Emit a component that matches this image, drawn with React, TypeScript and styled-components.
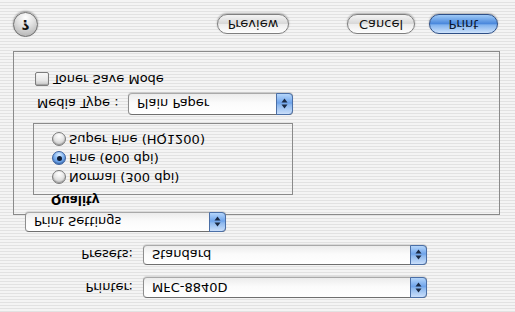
import React from 'react';
import styled, { createGlobalStyle, css } from 'styled-components';

const GlobalStyle = createGlobalStyle`
  html, body {
    margin: 0;
    padding: 0;
    background: #eeeeee;
  }
  * {
    box-sizing: border-box;
  }
`;

// the reference shows the whole sheet turned upside down (vertical mirror)
const Sheet = styled.div`
  width: 515px;
  height: 312px;
  overflow: hidden;
  padding-top: 14px;
  font-family: "DejaVu Sans", "Liberation Sans", sans-serif;
  font-size: 13px;
  color: #000;
  background: repeating-linear-gradient(
    to bottom,
    #e2e2e2 0px,
    #e2e2e2 1px,
    #f4f4f4 1px,
    #f4f4f4 3px
  );
  transform: scaleY(-1);
`;

const FieldRow = styled.div<{ gap?: number }>`
  display: grid;
  grid-template-columns: 133px 284px;
  column-gap: 10px;
  align-items: center;
  margin-top: ${p => p.gap ?? 0}px;
`;

const FieldLabel = styled.span`
  text-align: right;
  line-height: 15px;
`;

const PopupBox = styled.div<{ w: number; h: number }>`
  position: relative;
  display: flex;
  width: ${p => p.w}px;
  height: ${p => p.h}px;
  border: 1px solid #8d8d8d;
  border-top-color: #6f6f6f;
  border-bottom-color: #a9a9a9;
  border-radius: 4px;
  background: linear-gradient(to bottom, #ffffff 0%, #fbfbfb 55%, #ececec 100%);
  box-shadow: 0 1px 1px rgba(0, 0, 0, 0.12);
`;

const PopupText = styled.span`
  flex: 1;
  padding-left: 8px;
  display: flex;
  align-items: center;
  white-space: nowrap;
`;

const PopupArrows = styled.span`
  width: 17px;
  margin: -1px -1px -1px 0;
  border: 1px solid #4b6fa6;
  border-radius: 0 4px 4px 0;
  background: linear-gradient(to bottom, #c9defa 0%, #8db8ee 45%, #6ea3ea 55%, #b5d6fb 100%);
  display: flex;
  align-items: center;
  justify-content: center;
`;

const Popup: React.FC<{ value: string; w: number; h: number }> = ({ value, w, h }) => (
  <PopupBox w={w} h={h}>
    <PopupText>{value}</PopupText>
    <PopupArrows>
      <svg width="7" height="11" viewBox="0 0 7 11">
        <path d="M3.5 0.5 L6.5 4.5 L0.5 4.5 Z" fill="#1b2a44" />
        <path d="M3.5 10.5 L6.5 6.5 L0.5 6.5 Z" fill="#1b2a44" />
      </svg>
    </PopupArrows>
  </PopupBox>
);

const TabArea = styled.div`
  margin-top: 13px;
`;

const TabPopupSlot = styled.div`
  position: relative;
  z-index: 1;
  margin-left: 25px;
  width: 201px;
`;

const SettingsBox = styled.div`
  margin: -3px 15px 0 13px;
  height: 164px;
  border: 1px solid #8a8a8a;
  padding: 8px 0 0 19px;
`;

const GroupTitle = styled.div`
  margin-left: 18px;
  font-size: 12px;
  font-weight: bold;
  line-height: 12px;
  height: 11px;
`;

const GroupBox = styled.div`
  width: 260px;
  height: 72px;
  border: 1px solid #8a8a8a;
  padding: 7px 0 0 18px;
`;

const RadioRow = styled.label`
  display: flex;
  align-items: center;
  gap: 3px;
  height: 19px;
  line-height: 15px;
`;

const RadioDot = styled.span<{ on?: boolean }>`
  width: 14px;
  height: 14px;
  border-radius: 50%;
  border: 1px solid #7b7b7b;
  display: flex;
  align-items: center;
  justify-content: center;
  background: radial-gradient(circle at 50% 75%, #ffffff 0%, #e6e6e6 45%, #b9b9b9 100%);
  box-shadow: inset 0 1px 1px rgba(0, 0, 0, 0.25);
  ${p => p.on && css`
    border-color: #3a5f9c;
    background: radial-gradient(circle at 50% 75%, #d8ecff 0%, #7fb2f0 45%, #3f7fd8 100%);
    &::after {
      content: '';
      width: 5px;
      height: 5px;
      border-radius: 50%;
      background: #0f1c33;
    }
  `}
`;

const MediaRow = styled.div`
  display: flex;
  align-items: center;
  margin-top: 8px;
  padding-left: 4px;
`;

const MediaLabel = styled.span`
  width: 91px;
  white-space: nowrap;
`;

const CheckRow = styled.label`
  display: flex;
  align-items: center;
  gap: 4px;
  margin-top: 6px;
  padding-left: 2px;
  line-height: 15px;
`;

const CheckBox = styled.span`
  width: 14px;
  height: 14px;
  border: 1px solid #7d7d7d;
  border-radius: 2px;
  background: linear-gradient(to bottom, #c8c8c8 0%, #e8e8e8 40%, #f8f8f8 100%);
  box-shadow: inset 0 1px 1px rgba(0, 0, 0, 0.2);
`;

const ButtonRow = styled.div`
  display: flex;
  align-items: center;
  margin-top: 14px;
  padding: 0 17px 0 13px;
`;

const HelpButton = styled.button`
  width: 25px;
  height: 25px;
  padding: 0;
  border-radius: 50%;
  border: 1px solid #6e6e6e;
  background: radial-gradient(circle at 50% 80%, #ffffff 0%, #e2e2e2 40%, #a9a9a9 100%);
  box-shadow: 0 1px 2px rgba(0, 0, 0, 0.35);
  font-family: "DejaVu Sans", sans-serif;
  font-size: 14px;
  font-weight: bold;
  color: #111;
  line-height: 23px;
`;

const Spacer = styled.div`
  flex: 1;
`;

const PillButton = styled.button<{ w: number; primary?: boolean; gap?: number }>`
  width: ${p => p.w}px;
  height: 20px;
  margin-left: ${p => p.gap ?? 0}px;
  padding: 0;
  border-radius: 10px;
  border: 1px solid #7f7f7f;
  font-family: "DejaVu Sans", sans-serif;
  font-size: 13px;
  color: #111;
  line-height: 18px;
  background: linear-gradient(to bottom, #fefefe 0%, #ededed 48%, #d8d8d8 52%, #f4f4f4 100%);
  box-shadow: 0 1px 2px rgba(0, 0, 0, 0.3);
  ${p => p.primary && css`
    border-color: #2e4f86;
    color: #0c1830;
    background: linear-gradient(to bottom, #cfe3fb 0%, #7fb1ee 45%, #4a88dc 52%, #9fcaf7 100%);
  `}
`;

const qualities = [
  { label: 'Normal (300 dpi)', on: false },
  { label: 'Fine (600 dpi)', on: true },
  { label: 'Super Fine (HQ1200)', on: false },
];

export default function App() {
  return (
    <>
      <GlobalStyle />
      <Sheet>
        <FieldRow>
          <FieldLabel>Printer:</FieldLabel>
          <Popup value="MFC-8840D" w={284} h={21} />
        </FieldRow>
        <FieldRow gap={12}>
          <FieldLabel>Presets:</FieldLabel>
          <Popup value="Standard" w={284} h={20} />
        </FieldRow>

        <TabArea>
          <TabPopupSlot>
            <Popup value="Print Settings" w={201} h={20} />
          </TabPopupSlot>
          <SettingsBox>
            <GroupTitle>Quality</GroupTitle>
            <GroupBox>
              {qualities.map(q => (
                <RadioRow key={q.label}>
                  <RadioDot on={q.on} />
                  <span>{q.label}</span>
                </RadioRow>
              ))}
            </GroupBox>
            <MediaRow>
              <MediaLabel>Media Type :</MediaLabel>
              <Popup value="Plain Paper" w={165} h={22} />
            </MediaRow>
            <CheckRow>
              <CheckBox />
              <span>Toner Save Mode</span>
            </CheckRow>
          </SettingsBox>
        </TabArea>

        <ButtonRow>
          <HelpButton>?</HelpButton>
          <Spacer />
          <PillButton w={72}>Preview</PillButton>
          <PillButton w={68} gap={58}>Cancel</PillButton>
          <PillButton w={69} gap={14} primary>Print</PillButton>
        </ButtonRow>
      </Sheet>
    </>
  );
}
